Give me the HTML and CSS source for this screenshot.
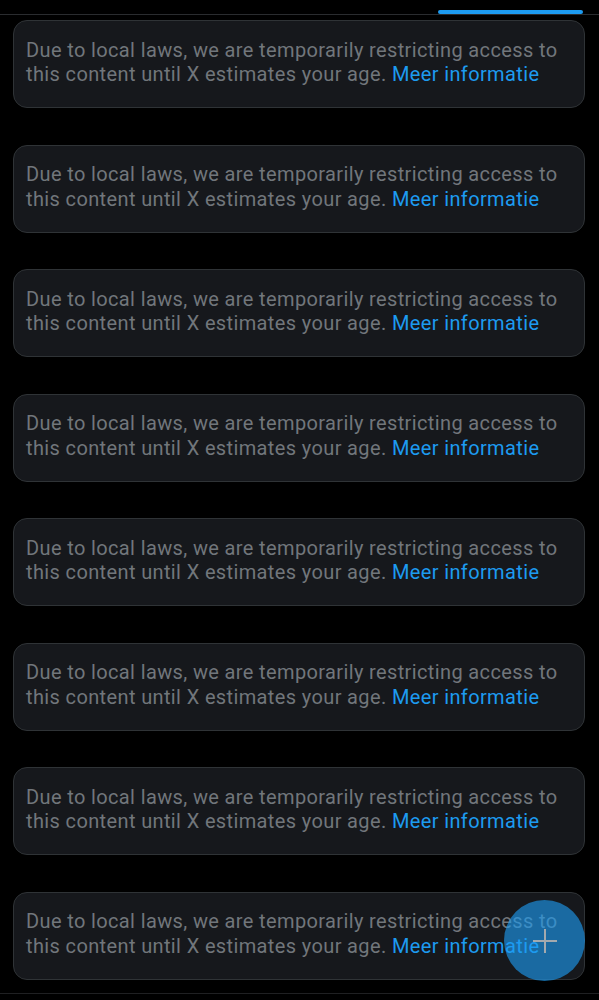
FILE: index.html
```html
<!DOCTYPE html>
<html lang="en">
<head>
<meta charset="utf-8">
<link rel="stylesheet" href="styles.css">
</head>
<body>
<div class="tabs"><div class="indicator"></div></div>
<main class="feed">
  <div class="notice">Due to local laws, we are temporarily restricting access to this content until X estimates your age. <a class="more">Meer informatie</a></div>
  <div class="notice">Due to local laws, we are temporarily restricting access to this content until X estimates your age. <a class="more">Meer informatie</a></div>
  <div class="notice">Due to local laws, we are temporarily restricting access to this content until X estimates your age. <a class="more">Meer informatie</a></div>
  <div class="notice">Due to local laws, we are temporarily restricting access to this content until X estimates your age. <a class="more">Meer informatie</a></div>
  <div class="notice">Due to local laws, we are temporarily restricting access to this content until X estimates your age. <a class="more">Meer informatie</a></div>
  <div class="notice">Due to local laws, we are temporarily restricting access to this content until X estimates your age. <a class="more">Meer informatie</a></div>
  <div class="notice">Due to local laws, we are temporarily restricting access to this content until X estimates your age. <a class="more">Meer informatie</a></div>
  <div class="notice">Due to local laws, we are temporarily restricting access to this content until X estimates your age. <a class="more">Meer informatie</a></div>
</main>
<div class="bottombar"></div>
<button class="fab" aria-label="Post">
  <svg width="26" height="26" viewBox="0 0 26 26"><path d="M13 1v24M1 13h24" stroke="#a3a9ae" stroke-width="2" fill="none"/></svg>
</button>
</body>
</html>
```
FILE: styles.css
```css
html, body {
  margin: 0;
  padding: 0;
  background: #000;
  height: 1000px;
  overflow: hidden;
}
body {
  font-family: Roboto, "Noto Sans", sans-serif;
}
.tabs {
  height: 14px;
  border-bottom: 1px solid #2a2c2f;
  display: flex;
  justify-content: flex-end;
  align-items: flex-end;
  padding-right: 16px;
}
.indicator {
  width: 145px;
  height: 4px;
  border-radius: 2px;
  background: #1d9bf0;
}
.feed {
  display: flex;
  flex-direction: column;
  gap: 36.5px;
  padding: 5px 14px 0 13px;
}
.notice {
  box-sizing: border-box;
  height: 88px;
  background: #16181c;
  border: 1px solid #2f3336;
  border-radius: 14px;
  padding: 16.5px 10px 0 12px;
  color: #71767b;
  font-size: 20px;
  letter-spacing: 0.37px;
  line-height: 24.5px;
}
.more {
  color: #1d9bf0;
}
.bottombar {
  margin-top: 13px;
  border-top: 1px solid #1f2022;
  height: 8px;
}
.fab {
  position: fixed;
  right: 14px;
  bottom: 19px;
  width: 81px;
  height: 81px;
  border-radius: 50%;
  border: none;
  padding: 0;
  background: rgba(29, 155, 240, 0.63);
  display: flex;
  align-items: center;
  justify-content: center;
}
```
